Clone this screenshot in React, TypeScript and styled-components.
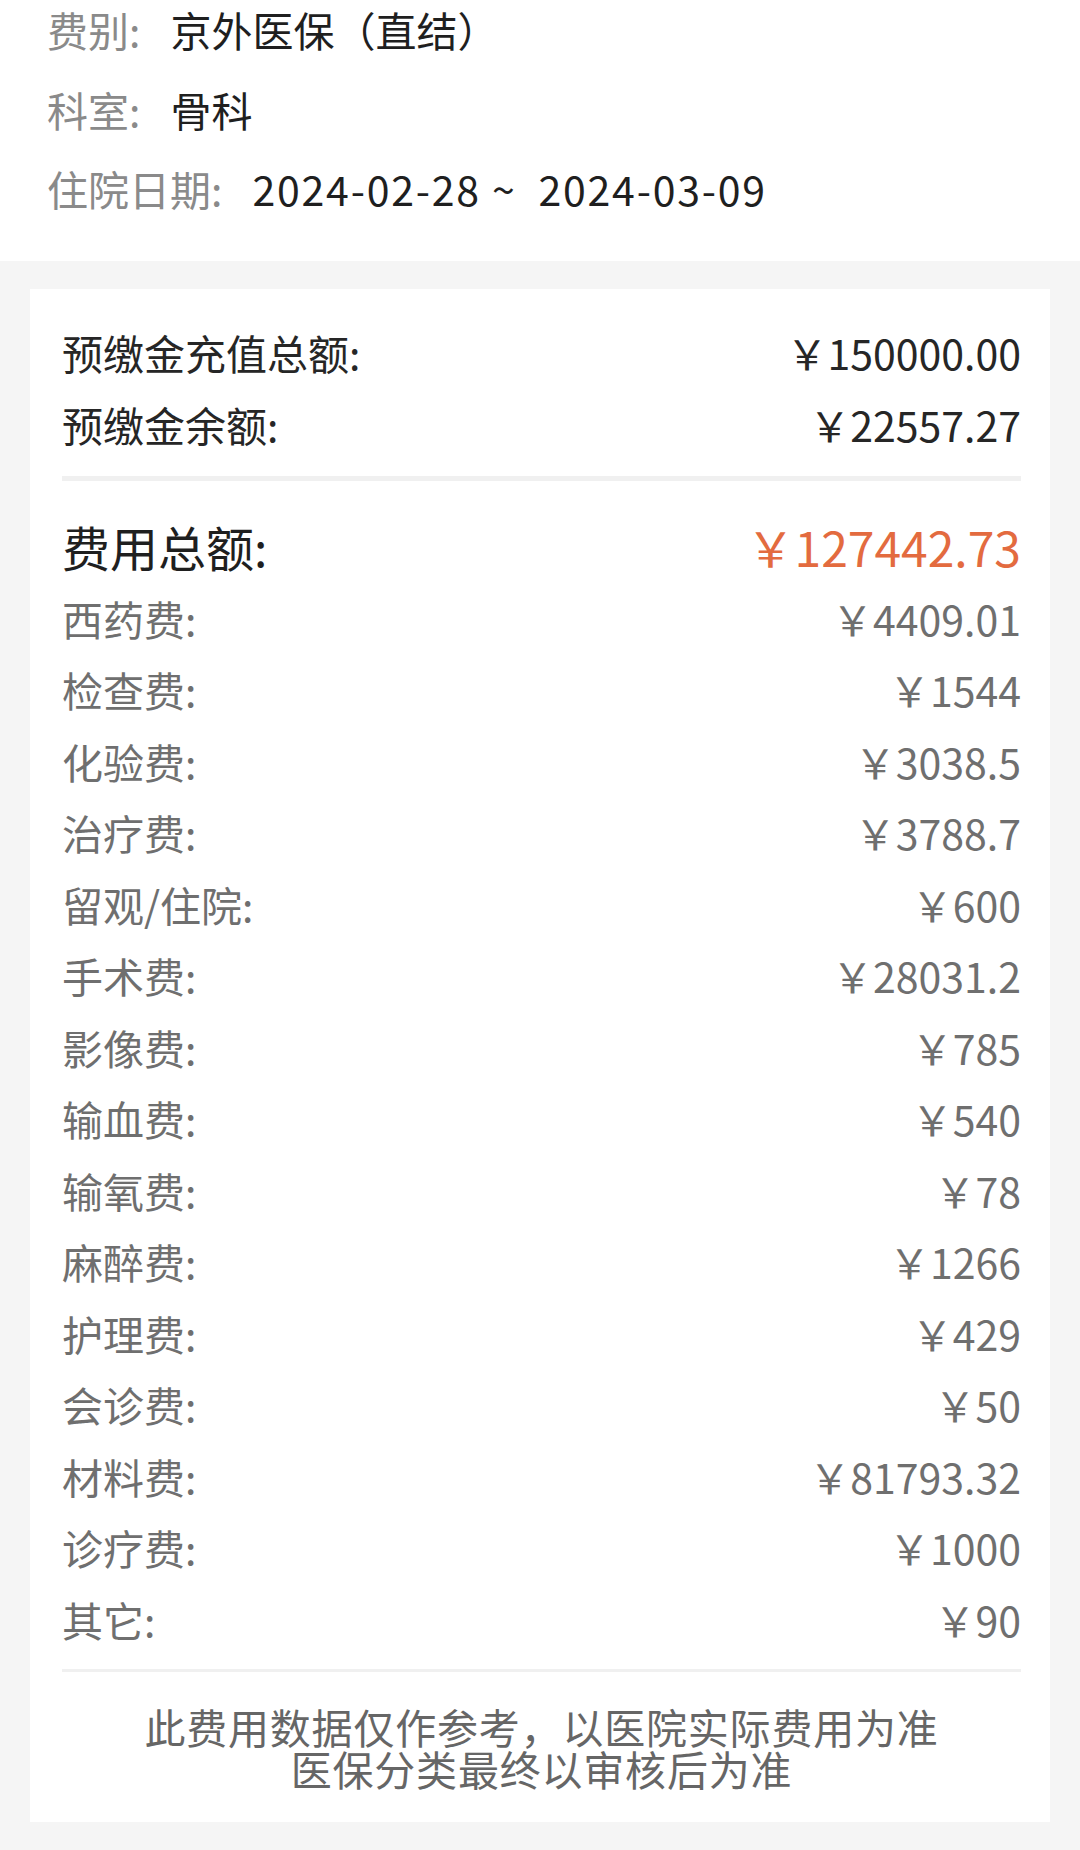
import styled, { createGlobalStyle } from "styled-components"

const GlobalStyle = createGlobalStyle`
  html, body {
    margin: 0;
    padding: 0;
    background: #f5f5f5;
  }
  body {
    font-family: "Noto Sans CJK SC", "Noto Sans", sans-serif;
  }
`

const info = [
  { label: "费别", value: "京外医保（直结）", spaced: false },
  { label: "科室", value: "骨科", spaced: false },
  { label: "住院日期", value: "2024-02-28 ~  2024-03-09", spaced: true },
]

const deposits = [
  { label: "预缴金充值总额", value: "150000.00" },
  { label: "预缴金余额", value: "22557.27" },
]

const fees = [
  { label: "西药费", value: "4409.01" },
  { label: "检查费", value: "1544" },
  { label: "化验费", value: "3038.5" },
  { label: "治疗费", value: "3788.7" },
  { label: "留观/住院", value: "600" },
  { label: "手术费", value: "28031.2" },
  { label: "影像费", value: "785" },
  { label: "输血费", value: "540" },
  { label: "输氧费", value: "78" },
  { label: "麻醉费", value: "1266" },
  { label: "护理费", value: "429" },
  { label: "会诊费", value: "50" },
  { label: "材料费", value: "81793.32" },
  { label: "诊疗费", value: "1000" },
  { label: "其它", value: "90" },
]

const App = () => {
  return (
    <>
      <GlobalStyle />
      <Page>
        <InfoSection>
          {info.map((row) => (
            <InfoRow key={row.label}>
              <InfoLabel>{row.label}:</InfoLabel>
              <InfoValue $spaced={row.spaced}>{row.value}</InfoValue>
            </InfoRow>
          ))}
        </InfoSection>
        <GreyArea>
          <Card>
            {deposits.map((row) => (
              <FeeRow key={row.label} $tone="dark">
                <span>{row.label}:</span>
                <span>￥{row.value}</span>
              </FeeRow>
            ))}
            <ThickDivider />
            <TotalRow>
              <span>费用总额:</span>
              <TotalValue>￥127442.73</TotalValue>
            </TotalRow>
            {fees.map((row) => (
              <FeeRow key={row.label} $tone="muted" $height={71.5}>
                <span>{row.label}:</span>
                <span>￥{row.value}</span>
              </FeeRow>
            ))}
            <ThinDivider />
            <Notice>
              此费用数据仅作参考，以医院实际费用为准
              <br />
              医保分类最终以审核后为准
            </Notice>
          </Card>
        </GreyArea>
      </Page>
    </>
  )
}
export default App

const Page = styled.div`
  width: 1080px;
  min-height: 1850px;
  background: #f5f5f5;
`

const InfoSection = styled.section`
  background: #ffffff;
  padding: 0 47px 44px;
  display: flex;
  flex-direction: column;
  gap: 21.5px;
`

const InfoRow = styled.div`
  display: flex;
  align-items: center;
  height: 58px;
  font-size: 41px;
  white-space: pre;
`

const InfoLabel = styled.span`
  color: #8a8a8a;
  margin-right: 30px;
`

const InfoValue = styled.span<{ $spaced: boolean }>`
  color: #1f1f1f;
  letter-spacing: ${(p) => (p.$spaced ? "1.8px" : "0")};
`

const GreyArea = styled.div`
  padding: 28px 30px 29px;
`

const Card = styled.div`
  background: #ffffff;
  padding: 27px 29px 33px 32px;
`

const FeeRow = styled.div<{ $tone: "dark" | "muted"; $height?: number }>`
  display: flex;
  justify-content: space-between;
  align-items: center;
  height: ${(p) => p.$height ?? 72}px;
  font-size: 41px;
  color: ${(p) => (p.$tone === "dark" ? "#262626" : "#6f6f6f")};
`

const TotalRow = styled.div`
  display: flex;
  justify-content: space-between;
  align-items: center;
  height: 72px;
  margin-top: 29px;
  font-size: 48px;
  color: #1f1f1f;
`

const TotalValue = styled.span`
  color: #e36b3f;
`

const ThickDivider = styled.div`
  height: 5px;
  margin-top: 16px;
  background: #f0f0f0;
`

const ThinDivider = styled.div`
  height: 3px;
  margin-top: 14px;
  background: #f0f0f0;
`

const Notice = styled.p`
  margin: 33px 0 0;
  text-align: center;
  font-size: 41px;
  letter-spacing: 0.8px;
  line-height: 42px;
  color: #666666;
`
